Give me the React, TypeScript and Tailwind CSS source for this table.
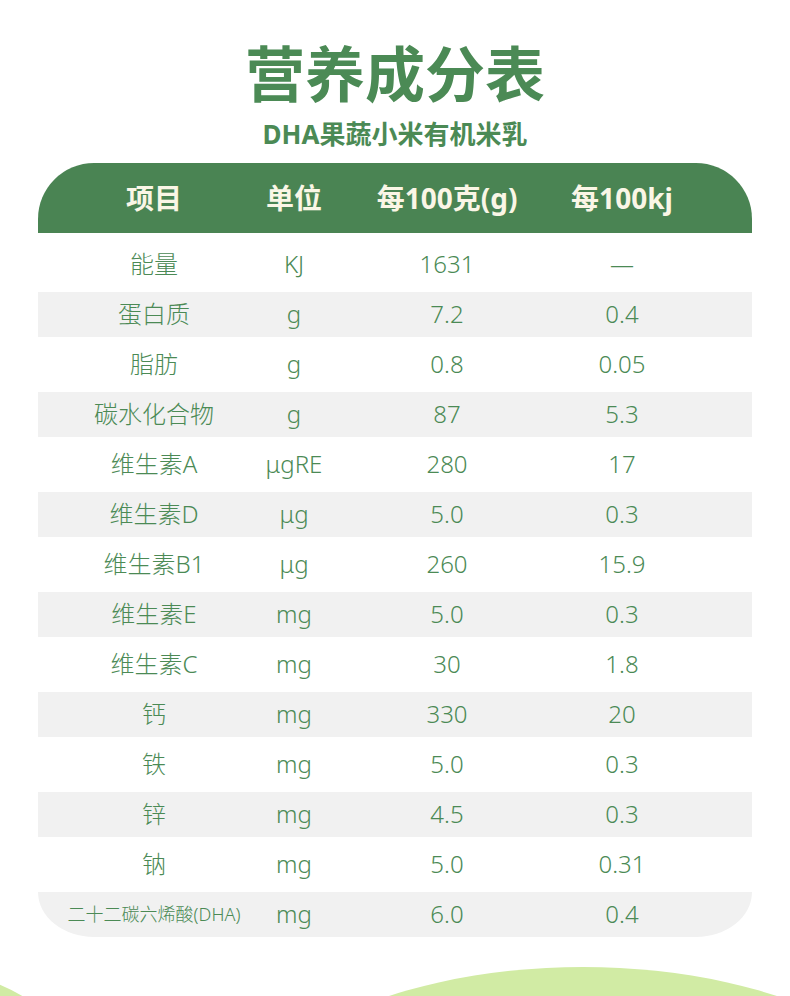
import React from "react";

const rows: [string, string, string, string][] = [
  ["能量", "KJ", "1631", "—"],
  ["蛋白质", "g", "7.2", "0.4"],
  ["脂肪", "g", "0.8", "0.05"],
  ["碳水化合物", "g", "87", "5.3"],
  ["维生素A", "μgRE", "280", "17"],
  ["维生素D", "μg", "5.0", "0.3"],
  ["维生素B1", "μg", "260", "15.9"],
  ["维生素E", "mg", "5.0", "0.3"],
  ["维生素C", "mg", "30", "1.8"],
  ["钙", "mg", "330", "20"],
  ["铁", "mg", "5.0", "0.3"],
  ["锌", "mg", "4.5", "0.3"],
  ["钠", "mg", "5.0", "0.31"],
  ["二十二碳六烯酸(DHA)", "mg", "6.0", "0.4"],
];

const font = { fontFamily: '"Noto Sans", "Noto Sans CJK SC", sans-serif' };

function Cells({ a, b, c, d, small }: { a: string; b: string; c: string; d: string; small?: boolean }) {
  return (
    <>
      <div className={`ml-[56px] flex w-[120px] shrink-0 justify-center whitespace-nowrap ${small ? "text-[18px]" : ""}`}>{a}</div>
      <div className="ml-[20px] flex w-[120px] shrink-0 justify-center whitespace-nowrap">{b}</div>
      <div className="ml-[33px] flex w-[120px] shrink-0 justify-center whitespace-nowrap">{c}</div>
      <div className="ml-[55px] flex w-[120px] shrink-0 justify-center whitespace-nowrap">{d}</div>
    </>
  );
}

export default function App() {
  return (
    <div
      className="relative h-[996px] w-full overflow-hidden bg-white font-['Noto_Sans','Noto_Sans_CJK_SC',sans-serif]"
      style={font}
    >
      {/* decorative blobs */}
      <div className="absolute left-[209px] top-[967px] h-[400px] w-[748px] rounded-[50%] bg-[#d1eba4]" />
      <div className="absolute left-[-278px] top-[969px] h-[400px] w-[400px] rounded-full bg-[#d1eba4]" />

      <div className="relative flex flex-col items-center">
        <div className="mt-[44px] text-[60px] font-bold leading-none text-[#4b8a55]">营养成分表</div>
        <div className="mt-[17px] text-[26px] font-bold leading-none text-[#4b8a55]">DHA果蔬小米有机米乳</div>

        <div className="mt-[16px] w-[714px]">
          <div className="flex h-[70px] items-center rounded-t-[56px] bg-[#4a8453] text-[28px] font-bold text-[#faf6e6]">
            <Cells a="项目" b="单位" c="每100克(g)" d="每100kj" />
          </div>
          <div className="mt-[6px] flex flex-col text-[24px] font-light text-[#4b8a55]">
            {rows.map((r, i) => {
              const grey = i % 2 === 1;
              const last = i === rows.length - 1;
              return (
                <div key={i} className="flex h-[50px] items-center">
                  <div
                    className={`flex h-[45px] w-full items-center ${grey ? "bg-[#f1f1f1]" : ""} ${
                      last ? "rounded-b-[56px_45px]" : ""
                    }`}
                  >
                    <Cells a={r[0]} b={r[1]} c={r[2]} d={r[3]} small={last} />
                  </div>
                </div>
              );
            })}
          </div>
        </div>
      </div>
    </div>
  );
}
